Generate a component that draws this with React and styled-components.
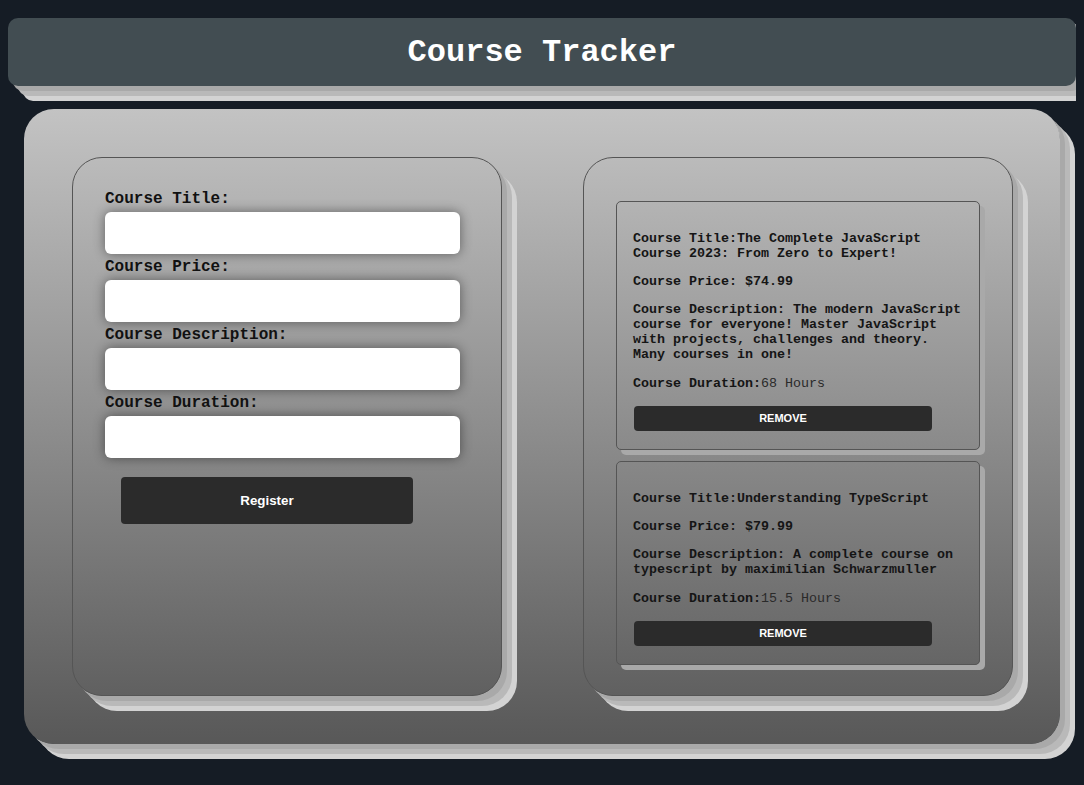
import styled, { createGlobalStyle } from "styled-components";

const GlobalStyle = createGlobalStyle`
  body {
    margin: 8px;
    background-color: #151c25;
    font-family: "Liberation Mono", "Courier New", monospace;
  }
`;

const layered = `
  5px 5px 0 0 #a9a9a9,
  10px 10px 0 0 #b9b9b9,
  15px 15px 0 0 #d3d3d3
`;

const Header = styled.header`
  margin-top: 10px;
  height: 68px;
  background-color: #424d52;
  border-radius: 10px;
  box-shadow: ${layered};
  display: flex;
  align-items: center;
  justify-content: center;

  > h1 {
    margin: 0;
    color: #fff;
    font-family: "Liberation Mono", "Courier New", monospace;
    font-size: 32px;
    font-weight: bold;
  }
`;

const Main = styled.main`
  margin: 23px 16px 24px;
  padding: 48px 47px 48px 48px;
  border-radius: 30px;
  background: linear-gradient(to bottom, #c3c3c3, #585858);
  box-shadow: ${layered};
  display: flex;
  justify-content: space-between;
  align-items: stretch;
`;

const Panel = styled.section`
  box-sizing: border-box;
  width: 430px;
  border: 1px solid #555;
  border-radius: 30px;
  box-shadow: ${layered};
`;

const FormPanel = styled(Panel)`
  padding: 32px 32px;
`;

const ListPanel = styled(Panel)`
  padding: 43px 33px 30px 32px;
  display: flex;
  flex-direction: column;
  gap: 11px;
`;

const Label = styled.label`
  display: block;
  font-size: 16px;
  line-height: 19px;
  font-weight: bold;
  color: #111;
`;

const Input = styled.input`
  display: block;
  box-sizing: border-box;
  width: 355px;
  height: 42px;
  margin: 3px 0 4px;
  border: none;
  border-radius: 6px;
  background: #fff;
  box-shadow: 0 0 12px rgba(0, 0, 0, 0.45);
  outline: none;
`;

const Button = styled.button`
  display: block;
  border: none;
  border-radius: 4px;
  background-color: #2b2b2b;
  color: #fff;
  font-family: "Liberation Sans", Arial, sans-serif;
  font-weight: bold;
  cursor: pointer;
`;

const RegisterButton = styled(Button)`
  width: 292px;
  height: 47px;
  margin: 19px 0 0 16px;
  font-size: 13.33px;
`;

const Card = styled.article`
  box-sizing: border-box;
  width: 364px;
  padding: 15.5px 16px 18px;
  border: 1px solid #555;
  border-radius: 5px;
  box-shadow: 5px 5px 0 0 #a9a9a9;

  > p {
    margin: 13.33px 0;
    font-size: 13.33px;
    line-height: 15px;
    font-weight: bold;
    color: #151515;
  }
`;

const Value = styled.span`
  font-weight: normal;
  color: #2a2a2a;
`;

const RemoveButton = styled(Button)`
  width: 298px;
  height: 25px;
  margin: 15px 0 0 1px;
  font-size: 11px;
`;

const fields = [
  "Course Title:",
  "Course Price:",
  "Course Description:",
  "Course Duration:",
];

const courses = [
  {
    id: 1,
    title: "The Complete JavaScript Course 2023: From Zero to Expert!",
    price: "$74.99",
    description:
      "The modern JavaScript course for everyone! Master JavaScript with projects, challenges and theory. Many courses in one!",
    duration: "68 Hours",
  },
  {
    id: 2,
    title: "Understanding TypeScript",
    price: "$79.99",
    description: "A complete course on typescript by maximilian Schwarzmuller",
    duration: "15.5 Hours",
  },
];

export default function App() {
  return (
    <>
      <GlobalStyle />
      <Header>
        <h1>Course Tracker</h1>
      </Header>
      <Main>
        <FormPanel as="form" onSubmit={(e) => e.preventDefault()}>
          {fields.map((f) => (
            <div key={f}>
              <Label>{f}</Label>
              <Input type="text" />
            </div>
          ))}
          <RegisterButton type="submit">Register</RegisterButton>
        </FormPanel>
        <ListPanel>
          {courses.map((c) => (
            <Card key={c.id}>
              <p>Course Title:{c.title}</p>
              <p>Course Price: {c.price}</p>
              <p>Course Description: {c.description}</p>
              <p>
                Course Duration:<Value>{c.duration}</Value>
              </p>
              <RemoveButton>REMOVE</RemoveButton>
            </Card>
          ))}
        </ListPanel>
      </Main>
    </>
  );
}
